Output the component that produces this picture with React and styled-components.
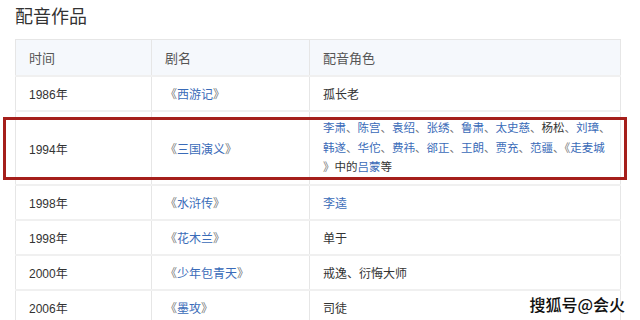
import React from "react";
import styled, { createGlobalStyle } from "styled-components";

const GlobalStyle = createGlobalStyle`
  body {
    margin: 0;
    background: #fff;
    font-family: "Liberation Sans", "Noto Sans CJK SC", sans-serif;
  }
`;

const works = [
  { year: "1986年", title: "西游记", roles: [{ text: "孤长老" }] },
  {
    year: "1994年",
    title: "三国演义",
    tall: true,
    lines: [
      [
        { text: "李肃", link: true },
        { text: "陈宫", link: true },
        { text: "袁绍", link: true },
        { text: "张绣", link: true },
        { text: "鲁肃", link: true },
        { text: "太史慈", link: true },
        { text: "杨松" },
        { text: "刘璋", link: true },
      ],
      [
        { text: "韩遂", link: true },
        { text: "华佗", link: true },
        { text: "费祎", link: true },
        { text: "郤正", link: true },
        { text: "王朗", link: true },
        { text: "贾充", link: true },
        { text: "范疆", link: true },
      ],
    ],
  },
  { year: "1998年", title: "水浒传", roles: [{ text: "李逵", link: true }] },
  { year: "1998年", title: "花木兰", roles: [{ text: "单于" }] },
  { year: "2000年", title: "少年包青天", roles: [{ text: "戒逸、衍悔大师" }] },
  { year: "2006年", title: "墨攻", roles: [{ text: "司徒" }] },
];

const Page = () => (
  <Wrapper>
    <Title>配音作品</Title>
    <TableBox>
      <Table>
        <colgroup>
          <col style={{ width: 136 }} />
          <col style={{ width: 158 }} />
          <col style={{ width: 311 }} />
        </colgroup>
        <thead>
          <tr>
            <Th>时间</Th>
            <Th>剧名</Th>
            <Th>配音角色</Th>
          </tr>
        </thead>
        <tbody>
          {works.map((w, i) => (
            <Row key={i} tall={w.tall}>
              <Td>{w.year}</Td>
              <Td>
                <Bracket>《</Bracket>
                <Link>{w.title}</Link>
                <Bracket>》</Bracket>
              </Td>
              <Td>
                {w.lines ? (
                  <Roles>
                    {w.lines.map((line, li) => (
                      <React.Fragment key={li}>
                        {line.map((r, ri) => (
                          <React.Fragment key={ri}>
                            {r.link ? <Link>{r.text}</Link> : r.text}
                            <Sep>、</Sep>
                          </React.Fragment>
                        ))}
                        {li === 1 && (
                          <>
                            <Bracket>《</Bracket>
                            <Link>走麦城</Link>
                          </>
                        )}
                        <br />
                      </React.Fragment>
                    ))}
                    <Bracket>》</Bracket>中的<Link>吕蒙</Link>等
                  </Roles>
                ) : (
                  w.roles.map((r, ri) =>
                    r.link ? <Link key={ri}>{r.text}</Link> : <span key={ri}>{r.text}</span>
                  )
                )}
              </Td>
            </Row>
          ))}
        </tbody>
      </Table>
      <Highlight />
    </TableBox>
    <Watermark>搜狐号@会火</Watermark>
  </Wrapper>
);

const App = () => (
  <>
    <GlobalStyle />
    <Page />
  </>
);

const Wrapper = styled.div`
  position: relative;
  width: 640px;
  height: 320px;
  overflow: hidden;
  padding: 5px 0 0 15px;
  box-sizing: border-box;
`;

const Title = styled.h2`
  margin: 0 0 10px;
  font-size: 18px;
  line-height: 24px;
  font-weight: normal;
  color: #333;
`;

const TableBox = styled.div`
  position: relative;
  width: 605px;
`;

const Table = styled.table`
  width: 605px;
  border-collapse: collapse;
  table-layout: fixed;
  border: 1px solid #e6e6e6;
`;

const Th = styled.th`
  height: 35px;
  padding: 0 13px;
  text-align: left;
  font-weight: normal;
  font-size: 13px;
  color: #555;
  background: #f5f8fc;
  border: 1px solid #e6e6e6;
`;

const Row = styled.tr`
  height: ${({ tall }) => (tall ? "74px" : "35px")};
`;

const Td = styled.td`
  padding: 0 13px;
  font-size: 12px;
  color: #333;
  border: 1px solid #e6e6e6;
  border-top: 2px solid #f0f0f0;
  vertical-align: middle;
  white-space: nowrap;
`;

const Roles = styled.div`
  font-size: 11.5px;
  line-height: 19.5px;
  padding-top: 1px;
`;

const Link = styled.span`
  color: #3a6bb8;
`;

const Bracket = styled.span`
  color: #777;
`;

const Sep = styled.span`
  color: #777;
`;

const Highlight = styled.div`
  position: absolute;
  left: -12px;
  top: 78px;
  width: 618px;
  height: 57px;
  border: 3px solid #a51f1b;
  pointer-events: none;
`;

const Watermark = styled.div`
  position: absolute;
  right: 15px;
  bottom: 7px;
  font-family: "Noto Sans CJK SC", sans-serif;
  font-size: 16px;
  line-height: 18px;
  font-weight: 500;
  color: #111;
  text-shadow: 1px 0 0 #fff, -1px 0 0 #fff, 0 1px 0 #fff, 0 -1px 0 #fff;
`;

export default App;
